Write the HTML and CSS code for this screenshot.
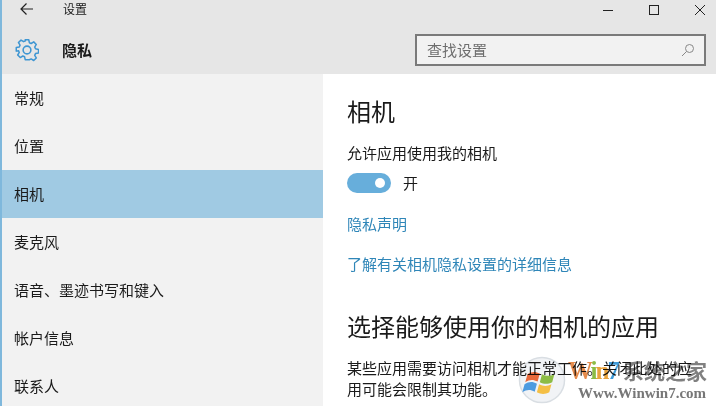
FILE: index.html
```html
<!DOCTYPE html>
<html lang="zh-CN">
<head>
  <meta charset="UTF-8">
  <title>设置</title>
  <link rel="stylesheet" href="styles.css">
</head>
<body>
  <div class="window">
    <header class="header">
      <div class="titlebar">
        <svg class="back" width="16" height="14" viewBox="0 0 16 14"><path d="M14 7H2M7.500 1.500L2 7l5.500 5.500" fill="none" stroke="#222" stroke-width="1.200"/></svg>
        <span class="title">设置</span>
        <div class="controls">
          <svg width="12" height="12" viewBox="0 0 12 12"><path d="M1 6.500h10" stroke="#222" stroke-width="1"/></svg>
          <svg width="12" height="12" viewBox="0 0 12 12"><rect x="1.500" y="1.500" width="9" height="9" fill="none" stroke="#222"/></svg>
          <svg width="12" height="12" viewBox="0 0 12 12"><path d="M1 1l10 10M11 1L1 11" stroke="#222" stroke-width="1"/></svg>
        </div>
      </div>
      <div class="headrow">
        <svg class="gear" width="24" height="24" viewBox="0 0 26 26">
          <path d="M11 2h4l.7 3.300 2 .9 2.900-1.800 2.900 2.900-1.800 2.900.9 2 3.400.7v4l-3.400.7-.9 2 1.800 2.900-2.900 2.900-2.900-1.800-2 .9L15 24.500h-4l-.7-3.300-2-.9-2.900 1.800-2.900-2.900 1.800-2.900-.9-2L0.900 14.800v-4l3.400-.7.900-2-1.800-2.900 2.900-2.900 2.900 1.800 2-.9z" transform="translate(0.500 0) scale(0.960)" fill="none" stroke="#3f96d2" stroke-width="1.700" stroke-linejoin="round"/>
          <circle cx="13" cy="13" r="4.200" fill="none" stroke="#3f96d2" stroke-width="1.700"/>
        </svg>
        <span class="page-name">隐私</span>
        <div class="search">
          <span class="search-text">查找设置</span>
          <svg width="14" height="14" viewBox="0 0 14 14"><circle cx="8.500" cy="5.500" r="4" fill="none" stroke="#888"/><path d="M5.500 8.500L1 13" stroke="#888"/></svg>
        </div>
      </div>
    </header>
    <div class="body">
      <nav class="sidebar">
        <a class="nav-item">常规</a>
        <a class="nav-item">位置</a>
        <a class="nav-item active">相机</a>
        <a class="nav-item">麦克风</a>
        <a class="nav-item">语音、墨迹书写和键入</a>
        <a class="nav-item">帐户信息</a>
        <a class="nav-item">联系人</a>
      </nav>
      <main class="content">
        <h1>相机</h1>
        <p class="label">允许应用使用我的相机</p>
        <div class="toggle-row">
          <span class="toggle"><span class="knob"></span></span>
          <span>开</span>
        </div>
        <a class="link link-first">隐私声明</a>
        <a class="link link-second">了解有关相机隐私设置的详细信息</a>
        <h2>选择能够使用你的相机的应用</h2>
        <p class="desc">某些应用需要访问相机才能正常工作。关闭此处的应用可能会限制其功能。</p>
      </main>
    </div>
  </div>

  <div class="watermark">
    <svg class="wm-logo" width="48" height="48" viewBox="0 0 66 66">
      <circle cx="33" cy="33" r="31" fill="#f1f3f6" stroke="#d9dee3" stroke-width="2"/>
      <path d="M13 25c6-4 11-4 17-1l-3 11c-6-3-11-3-17 1z" fill="#e8693b"/>
      <path d="M33 25c6 3 11 3 17 0l-3 11c-6 3-11 3-17 0z" fill="#8cbc45"/>
      <path d="M9 39c6-4 11-4 17-1l-3 11c-6-3-11-3-17 1z" fill="#4d9be0"/>
      <path d="M29 39c6 3 11 3 17 0l-3 11c-6 3-11 3-17 0z" fill="#f4bf45"/>
    </svg>
    <div class="wm-brand">
      <span class="wm-w">W</span><span class="wm-i">i</span><span class="wm-n">n</span><span class="wm-7">7</span><span class="wm-cn">系统之家</span>
    </div>
    <div class="wm-url">Www.Winwin7.com</div>
  </div>
</body>
</html>
```

FILE: styles.css
```css
html, body {
  margin: 0;
  padding: 0;
  height: 100%;
  overflow: hidden;
}
body {
  font-family: "Noto Sans CJK SC", "Liberation Sans", sans-serif;
  color: #1a1a1a;
  background-color: #fff;
}
.window {
  width: 716px;
  height: 406px;
  box-sizing: border-box;
  border-left: 2px solid #7fb8dc;
  display: flex;
  flex-direction: column;
}
.header {
  height: 74px;
  flex: none;
  background-color: #e6e6e6;
}
.titlebar {
  height: 18px;
  display: flex;
  align-items: center;
}
.back {
  margin-left: 17px;
}
.title {
  margin-left: 28px;
  padding-bottom: 2px;
  font-size: 12px;
}
.controls {
  margin-left: auto;
  margin-right: 10px;
  padding-top: 2px;
  display: flex;
  gap: 34px;
}
.headrow {
  height: 56px;
  box-sizing: border-box;
  padding-top: 8px;
  display: flex;
  align-items: center;
}
.gear {
  margin-left: 13px;
}
.page-name {
  margin-left: 23px;
  padding-bottom: 2px;
  font-size: 15px;
  font-weight: 700;
}
.search {
  margin-left: auto;
  margin-right: 10px;
  width: 291px;
  height: 32px;
  box-sizing: border-box;
  padding: 0 9px 0 10px;
  border: 2px solid #7a7a7a;
  background-color: #f2f2f2;
  display: flex;
  align-items: center;
  justify-content: space-between;
}
.search-text {
  padding-bottom: 2px;
  font-size: 15px;
  color: #6e6e6e;
}
.body {
  flex: 1;
  display: flex;
  min-height: 0;
}
.sidebar {
  width: 321px;
  flex: none;
  background-color: #f2f2f2;
}
.nav-item {
  display: flex;
  align-items: center;
  height: 48px;
  padding-left: 12px;
  font-size: 15px;
  line-height: 20px;
}
.nav-item.active {
  background-color: #a0cae3;
}
.content {
  flex: 1;
  padding-left: 24px;
  min-width: 0;
}
h1 {
  margin: 20px 0 0;
  font-size: 24px;
  font-weight: 400;
  line-height: 34px;
}
.label {
  margin: 15px 0 0;
  font-size: 15px;
  line-height: 20px;
}
.toggle-row {
  margin-top: 10px;
  display: flex;
  align-items: center;
  gap: 12px;
  font-size: 15px;
  line-height: 20px;
}
.toggle {
  width: 44px;
  height: 20px;
  border-radius: 10px;
  background-color: #67aedb;
  display: flex;
  align-items: center;
  justify-content: flex-end;
  padding-right: 6px;
  box-sizing: border-box;
}
.knob {
  width: 10px;
  height: 10px;
  border-radius: 50%;
  background-color: #fff;
}
.link {
  display: block;
  font-size: 15px;
  line-height: 20px;
  color: #2f86b8;
}
.link-first {
  margin-top: 21px;
}
.link-second {
  margin-top: 20px;
}
h2 {
  margin: 35px 0 0;
  font-size: 24px;
  font-weight: 400;
  line-height: 34px;
}
.desc {
  margin: 14px 0 0;
  font-size: 15px;
  line-height: 21px;
  width: 350px;
}
.watermark {
  position: absolute;
  left: 518px;
  top: 356px;
  width: 198px;
  height: 50px;
  mix-blend-mode: multiply;
}
.wm-logo {
  position: absolute;
  left: 0;
  top: 0;
}
.wm-brand {
  position: absolute;
  left: 50px;
  top: 0;
  white-space: nowrap;
  font-weight: 700;
  line-height: 28px;
}
.wm-w, .wm-i, .wm-n, .wm-7 {
  font-family: "Liberation Serif", serif;
  font-size: 25px;
  letter-spacing: -2px;
}
.wm-w {
  color: #e58b4c;
}
.wm-i {
  color: #8cbc45;
}
.wm-n {
  color: #e8a23c;
}
.wm-7 {
  color: #3f9bd8;
}
.wm-cn {
  margin-left: 5px;
  font-size: 21px;
  color: #808080;
}
.wm-url {
  position: absolute;
  left: 60px;
  top: 29px;
  font-family: "Liberation Serif", serif;
  font-size: 15px;
  font-weight: 700;
  color: #777;
  white-space: nowrap;
}
```
